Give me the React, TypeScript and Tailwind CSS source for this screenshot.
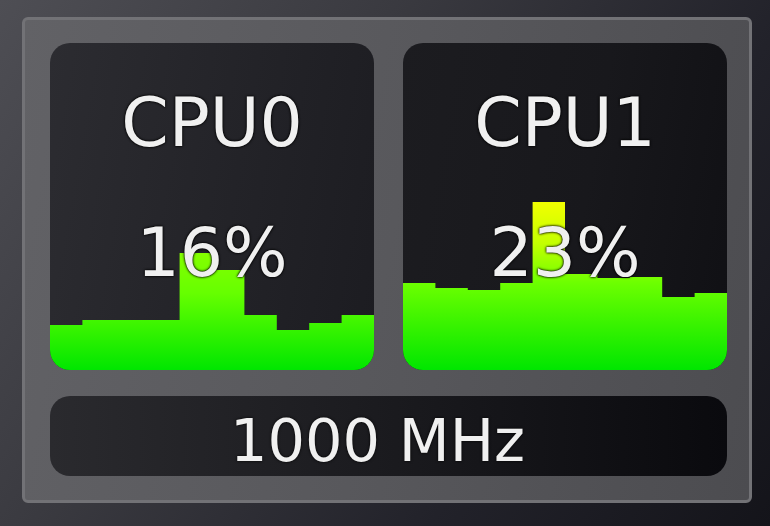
import React from 'react';

type Cpu = {
  name: string;
  load: number;
  // bar tops in card pixels (card is 324 x 327)
  tops: number[];
  stops: [number, string][];
  cardBg: string;
};

const cpus: Cpu[] = [
  {
    name: 'CPU0',
    load: 16,
    tops: [282, 277, 277, 277, 210, 227, 272, 287, 280, 272],
    stops: [
      [200, '#8cff00'],
      [250, '#66ff00'],
      [327, '#00e600'],
    ],
    cardBg: 'bg-[linear-gradient(100deg,#2c2c31_0%,#232328_55%,#1c1c21_100%)]',
  },
  {
    name: 'CPU1',
    load: 23,
    tops: [240, 245, 247, 240, 159, 231, 235, 234, 254, 250],
    stops: [
      [159, '#f2ff00'],
      [200, '#c4ff00'],
      [240, '#6cff00'],
      [327, '#00e600'],
    ],
    cardBg: 'bg-[linear-gradient(100deg,#1c1c20_0%,#18181c_55%,#101014_100%)]',
  },
];

function Graph({ cpu }: { cpu: Cpu }) {
  const w = 324 / cpu.tops.length;
  const id = `grad-${cpu.name}`;
  // one stepped outline so the columns don't leave seams
  let d = 'M0 327';
  cpu.tops.forEach((t, i) => {
    d += ` L${(i * w).toFixed(1)} ${t} L${((i + 1) * w).toFixed(1)} ${t}`;
  });
  d += ' L324 327 Z';
  return (
    <svg className="absolute inset-0" width="324" height="327" viewBox="0 0 324 327">
      <defs>
        <linearGradient id={id} gradientUnits="userSpaceOnUse" x1="0" y1={cpu.stops[0][0]} x2="0" y2="327">
          {cpu.stops.map(([y, c]) => (
            <stop key={y} offset={(y - cpu.stops[0][0]) / (327 - cpu.stops[0][0])} stopColor={c} />
          ))}
        </linearGradient>
      </defs>
      <path d={d} fill={`url(#${id})`} />
    </svg>
  );
}

function CpuCard({ cpu }: { cpu: Cpu }) {
  return (
    <div className={`relative w-[324px] h-[327px] rounded-[20px] overflow-hidden ${cpu.cardBg}`}>
      <Graph cpu={cpu} />
      <div className="relative flex flex-col items-center pt-[46px] text-[68px] leading-none text-[#f0f0f0] [text-shadow:0_0_3px_#000,0_0_2px_#000]">
        <span>{cpu.name}</span>
        <span className="mt-[62px]">{cpu.load}%</span>
      </div>
    </div>
  );
}

export default function App() {
  return (
    <div
      className="w-[770px] h-[526px] pl-[22px] pt-[17px] bg-[linear-gradient(125deg,#4e4e54_0%,#3a3a40_35%,#22222a_70%,#14141a_100%)]"
      style={{ fontFamily: '"DejaVu Sans", sans-serif' }}
    >
      <div className="w-[730px] h-[486px] rounded-[6px] border-[3px] border-[#727276] bg-[linear-gradient(100deg,#626266_0%,#58585c_50%,#4c4c50_100%)] pl-[25px] pt-[23px]">
        <div className="flex gap-[29px]">
          {cpus.map((c) => (
            <CpuCard key={c.name} cpu={c} />
          ))}
        </div>
        <div className="mt-[26px] w-[677px] h-[80px] rounded-[20px] bg-[linear-gradient(90deg,#2a2a2e_0%,#1c1c20_45%,#0a0a0e_100%)] pt-[15px] pr-[22px] text-center text-[59px] leading-none text-[#f0f0f0] [text-shadow:0_0_3px_#000]">
          1000 MHz
        </div>
      </div>
    </div>
  );
}
